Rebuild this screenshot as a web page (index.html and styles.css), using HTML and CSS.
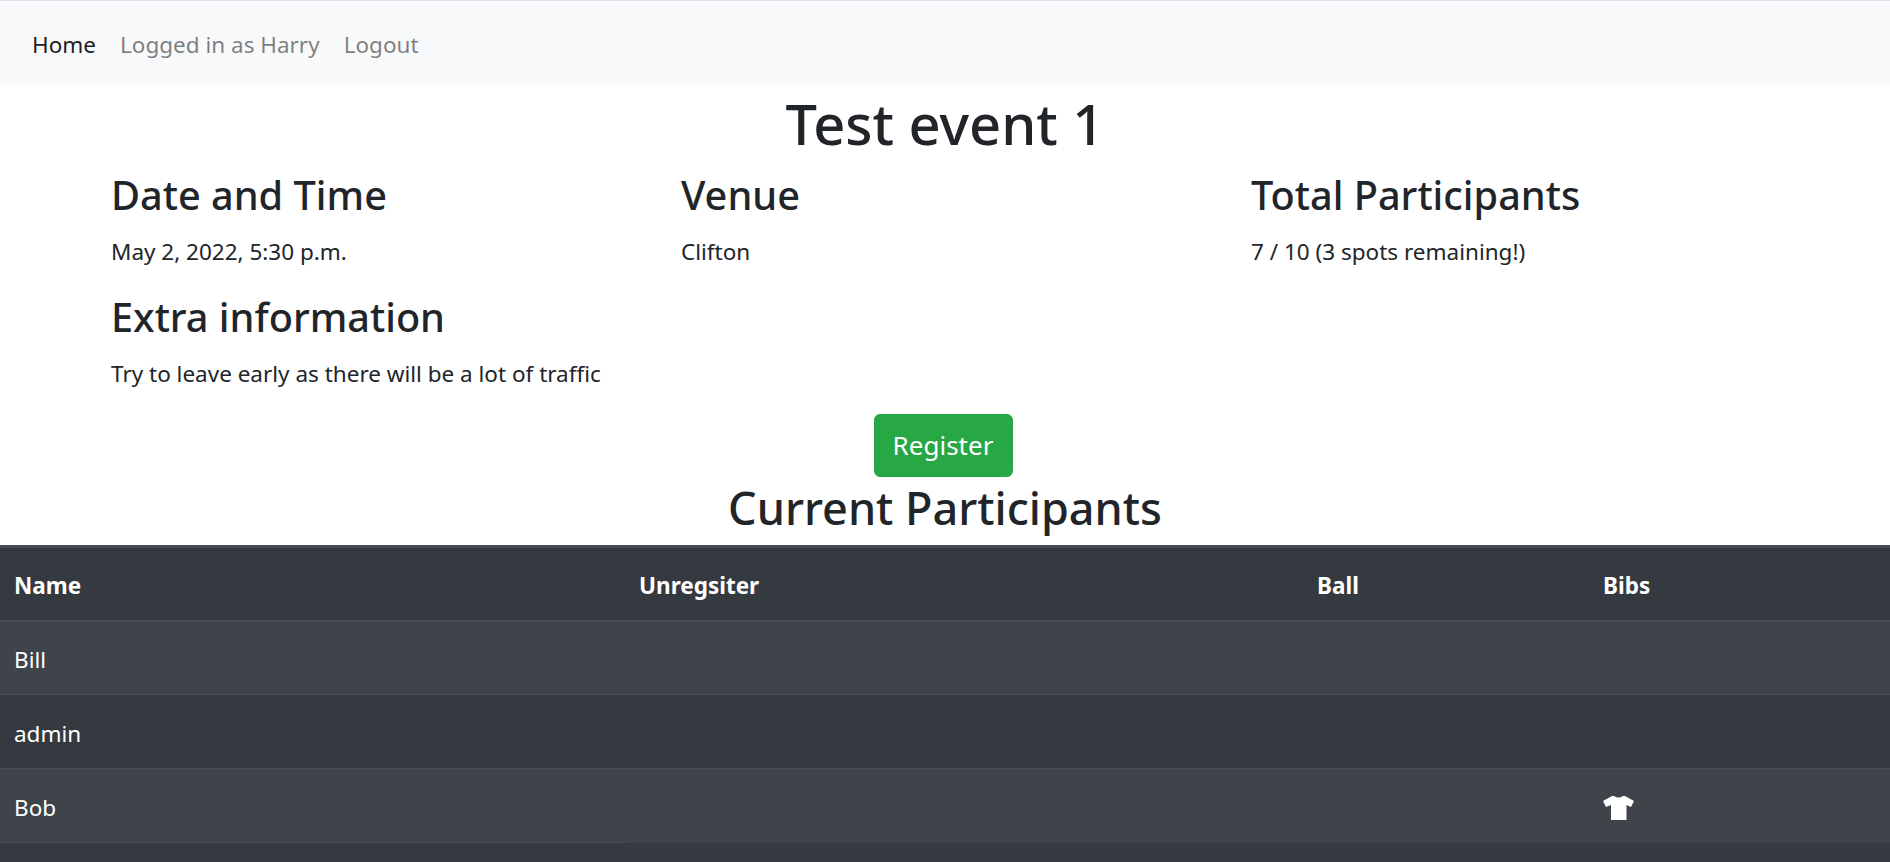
FILE: index.html
```html
<!DOCTYPE html>
<html lang="en">
<head>
  <meta charset="UTF-8">
  <title>Test event 1</title>
  <link rel="stylesheet" href="styles.css">
</head>
<body>
  <nav class="navbar">
    <a class="nav-link active" href="#">Home</a>
    <a class="nav-link" href="#">Logged in as Harry</a>
    <a class="nav-link" href="#">Logout</a>
  </nav>

  <h1 class="event-title">Test event 1</h1>

  <section class="details">
    <div class="detail">
      <h2>Date and Time</h2>
      <p>May 2, 2022, 5:30 p.m.</p>
    </div>
    <div class="detail">
      <h2>Venue</h2>
      <p>Clifton</p>
    </div>
    <div class="detail">
      <h2>Total Participants</h2>
      <p>7 / 10 (3 spots remaining!)</p>
    </div>
    <div class="detail detail-wide">
      <h2>Extra information</h2>
      <p>Try to leave early as there will be a lot of traffic</p>
    </div>
  </section>

  <div class="register">
    <button type="button" class="btn-register">Register</button>
  </div>

  <h1 class="participants-title">Current Participants</h1>

  <table class="participants">
    <thead>
      <tr>
        <th class="col-name">Name</th>
        <th class="col-unreg">Unregsiter</th>
        <th class="col-ball">Ball</th>
        <th>Bibs</th>
      </tr>
    </thead>
    <tbody>
      <tr><td>Bill</td><td></td><td></td><td></td></tr>
      <tr><td>admin</td><td></td><td></td><td></td></tr>
      <tr>
        <td>Bob</td><td></td><td></td>
        <td>
          <svg class="shirt" viewBox="0 0 31 24" width="31" height="24" aria-label="Bibs">
            <path d="M0 5 L9 0 L11 0 Q15.5 3 20 0 L22 0 L31 5 L28 11 L23.5 9 L23.5 24 L8 24 L8 9 L3 11 Z" fill="#fff"/>
          </svg>
        </td>
      </tr>
      <tr class="row-cut"><td></td><td></td><td></td><td></td></tr>
    </tbody>
  </table>
</body>
</html>
```

FILE: styles.css
```css
body {
  font-family: "Noto Sans", "Open Sans", sans-serif;
  font-size: 22.5px;
  line-height: 1.5;
  color: #212529;
  background-color: #fff;
  margin: 0;
  padding: 0;
}

.navbar {
  display: flex;
  align-items: center;
  gap: 24px;
  height: 85px;
  padding: 3px 32px 0;
  box-sizing: border-box;
  background-color: #f8f9fa;
  border-top: 1px solid #dee2e6;
}
.nav-link {
  color: rgba(0, 0, 0, 0.5);
  text-decoration: none;
}
.nav-link.active {
  color: rgba(0, 0, 0, 0.9);
}

h1, h2, p {
  margin: 0;
  font-weight: 500;
}
.event-title {
  font-size: 56px;
  line-height: 1.2;
  text-align: center;
  height: 79px;
  padding-top: 5px;
  box-sizing: border-box;
}
.participants-title {
  font-size: 45px;
  line-height: 1.2;
  text-align: center;
  height: 68px;
  padding-top: 4px;
  box-sizing: border-box;
}

.details {
  display: grid;
  grid-template-columns: 570px 570px 570px;
  padding-left: 111px;
}
.detail {
  height: 122px;
}
.detail h2 {
  font-size: 39.7px;
  line-height: 1.2;
  margin-bottom: 15px;
  padding-top: 8px;
}
.detail p {
  font-weight: 400;
}
.detail-wide {
  grid-column: 1 / span 3;
}

.register {
  display: flex;
  justify-content: center;
  padding: 6px 4px 0 0;
}
.btn-register {
  font-family: inherit;
  font-size: 26px;
  line-height: 1.5;
  color: #fff;
  background-color: #28a745;
  border: 1px solid #28a745;
  border-radius: 6px;
  width: 139px;
  height: 63px;
  padding: 0;
  cursor: pointer;
}

.participants {
  width: 100%;
  border-collapse: collapse;
  table-layout: fixed;
  color: #fff;
  background-color: #343a40;
}
.col-name {
  width: 625px;
}
.col-unreg {
  width: 678px;
}
.col-ball {
  width: 286px;
}
.participants th,
.participants td {
  height: 74px;
  padding: 5px 14px 0;
  box-sizing: border-box;
  text-align: left;
  vertical-align: middle;
  border-top: 1px solid #454d55;
}
.participants thead th {
  padding-top: 4px;
  border-top: 3px solid #454d55;
  border-bottom: 2px solid #454d55;
  font-weight: 700;
}
.participants tbody tr:nth-child(odd) {
  background-color: rgba(255, 255, 255, 0.05);
}
.participants .row-cut {
  background-color: transparent;
}
.participants .row-cut td {
  height: 20px;
  padding: 0;
  border-top-color: transparent;
}
.participants .row-cut td:first-child {
  border-top-color: #454d55;
}
.shirt {
  display: block;
}
```
